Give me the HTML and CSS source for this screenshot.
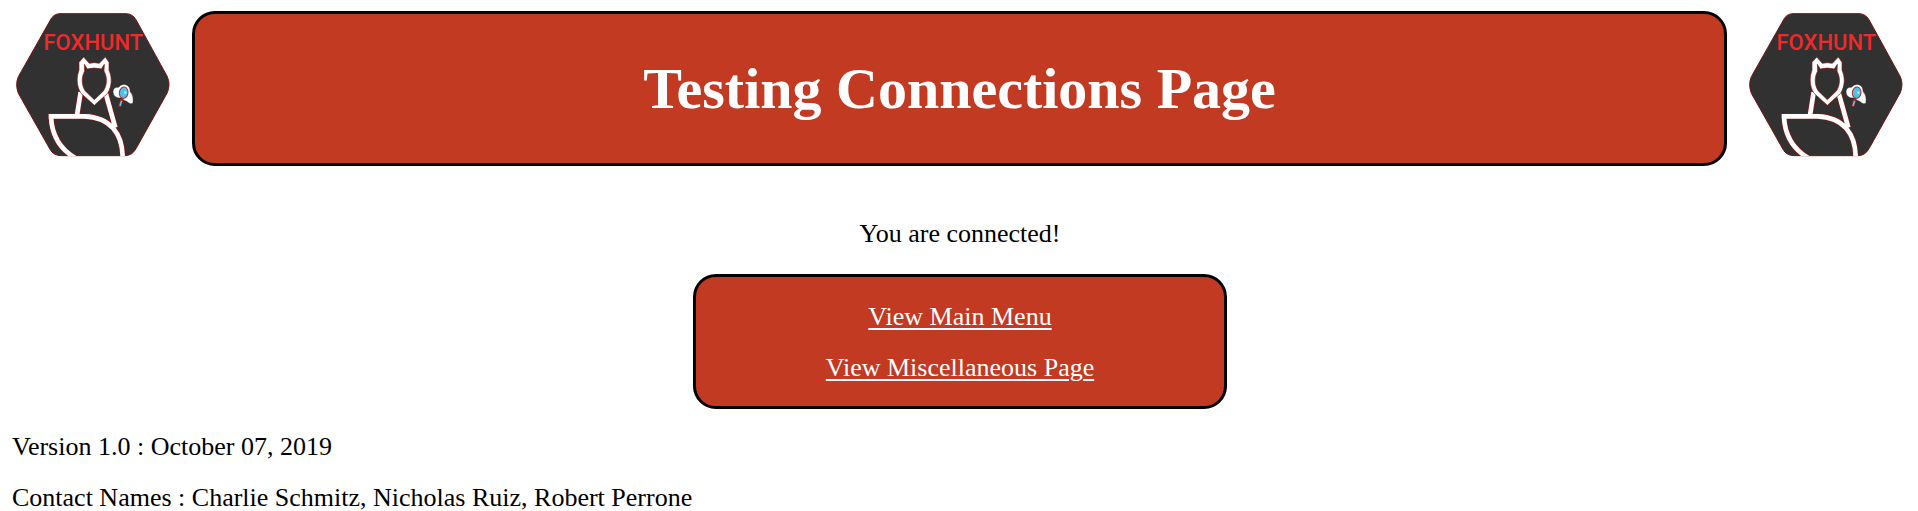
FILE: index.html
```
<!DOCTYPE html>
<html lang="en">
<head>
<meta charset="utf-8">
<title>Testing Connections Page</title>
<link rel="stylesheet" href="styles.css">
</head>
<body>
<header class="top">
  <svg class="logo" viewBox="45 36 468 444" role="img" aria-label="Foxhunt">
    <clipPath id="hexclip"><path d="M180 41H378Q397 41 408 59L502 230Q512 253 502 278L408 446Q396 468 375 468H184Q160 468 150 448L55 280Q45 253 55 230L150 62Q160 41 180 41Z"/></clipPath>
    <g id="foxhunt">
      <path class="hex" d="M180 41H378Q397 41 408 59L502 230Q512 253 502 278L408 446Q396 467 375 467H184Q160 467 150 448L55 280Q45 253 55 230L150 62Q160 41 180 41Z"/>
      <text class="brand" x="280" y="151" text-anchor="middle">FOXHUNT</text>
      <g clip-path="url(#hexclip)">
        <path class="rim" d="M242 276L231 346M316 276L346 383M144 349H254C330 352 368 400 368 474M153 349C155 402 178 446 226 474"/>
        <path class="fox" d="M242 276L231 346M316 276L346 383M146 349H254C330 352 368 400 368 474M153 349C155 402 178 446 226 474"/>
      </g>
      <path class="head" d="M251 171L268 190Q283 186 298 190L316 171L327 187V211C337 232 336 258 323 280L283 316L243 280C229 258 229 232 237 211V187Z"/>
      <path class="face" d="M253 193L262 207Q283 201 304 207L313 193L312 213C322 232 322 252 311 272L283 299L255 272C244 252 244 232 254 213Z"/>
      <path class="cloud" d="M339 276Q339 261 356 262Q363 251 377 254Q391 259 390 274Q402 288 399 308Q392 316 380 304Q369 302 363 294Q341 295 339 276Z"/>
      <path class="handle" d="M367 294L359 320"/>
      <path class="grip" d="M365 302L360 318"/>
      <ellipse class="lens" cx="371" cy="278" rx="13" ry="17" transform="rotate(8 371 278)"/>
      <circle class="glint" cx="376" cy="278" r="4"/>
    </g>
  </svg>
  <div class="panel banner"><h1 class="title">Testing Connections Page</h1></div>
  <svg class="logo" viewBox="45 36 468 444" role="img" aria-label="Foxhunt"><use href="#foxhunt"/></svg>
</header>
<main class="main">
  <p class="line">You are connected!</p>
  <nav class="panel menu">
    <a class="link" href="#menu">View Main Menu</a>
    <a class="link" href="#misc">View Miscellaneous Page</a>
  </nav>
</main>
<footer class="foot">
  <p class="line">Version 1.0 : October 07, 2019</p>
  <p class="line">Contact Names : Charlie Schmitz, Nicholas Ruiz, Robert Perrone</p>
</footer>
</body>
</html>
```
FILE: styles.css
```
body {
  margin: 11px 0 0;
  background: #fff;
  color: #000;
  font-family: "Liberation Serif", serif;
  font-size: 26px;
  line-height: 29px;
}
.top { display: flex; gap: 21px; padding: 0 14px 0 15px; }
.logo { flex: none; width: 156px; height: 148px; margin-top: 1px; }
.panel {
  box-sizing: border-box;
  background: #c23a22;
  border: 3px solid #000;
  border-radius: 23px;
}
.banner { flex: 1; padding: 45px 24px 44px; text-align: center; }
.title { margin: 0; color: #fff; font-size: 58px; line-height: 60px; font-weight: bold; }
.line { margin: 0; }
.main { display: flex; flex-direction: column; align-items: center; gap: 26px; padding: 53px 5px 0 7px; }
.menu {
  display: flex;
  flex-direction: column;
  align-items: center;
  gap: 22px;
  width: 28%;
  min-width: 320px;
  padding: 25px 24px 24px;
}
.link { color: #fff; text-decoration-thickness: 2px; text-underline-offset: 3px; }
.foot { display: flex; flex-direction: column; gap: 22px; padding: 23px 12px 0; }

.hex { fill: #313131; stroke: #7c1010; stroke-width: 3; }
.brand { fill: #ee2a2a; font-family: Roboto, sans-serif; font-size: 66px; font-weight: 500; }
.rim { fill: none; stroke: #941414; stroke-width: 18; }
.fox { fill: none; stroke: #fff; stroke-width: 14; }
.head { fill: #fff; stroke: #941414; stroke-width: 2; }
.face { fill: #313131; stroke: #941414; stroke-width: 2; }
.cloud { fill: #fff; stroke: #151515; stroke-width: 1; }
.handle { stroke: #a81c1c; stroke-width: 9; }
.grip { stroke: #4cc3ea; stroke-width: 5; }
.lens { fill: #4cc3ea; stroke: #b32626; stroke-width: 3; }
.glint { fill: #a5e4f7; }
```
